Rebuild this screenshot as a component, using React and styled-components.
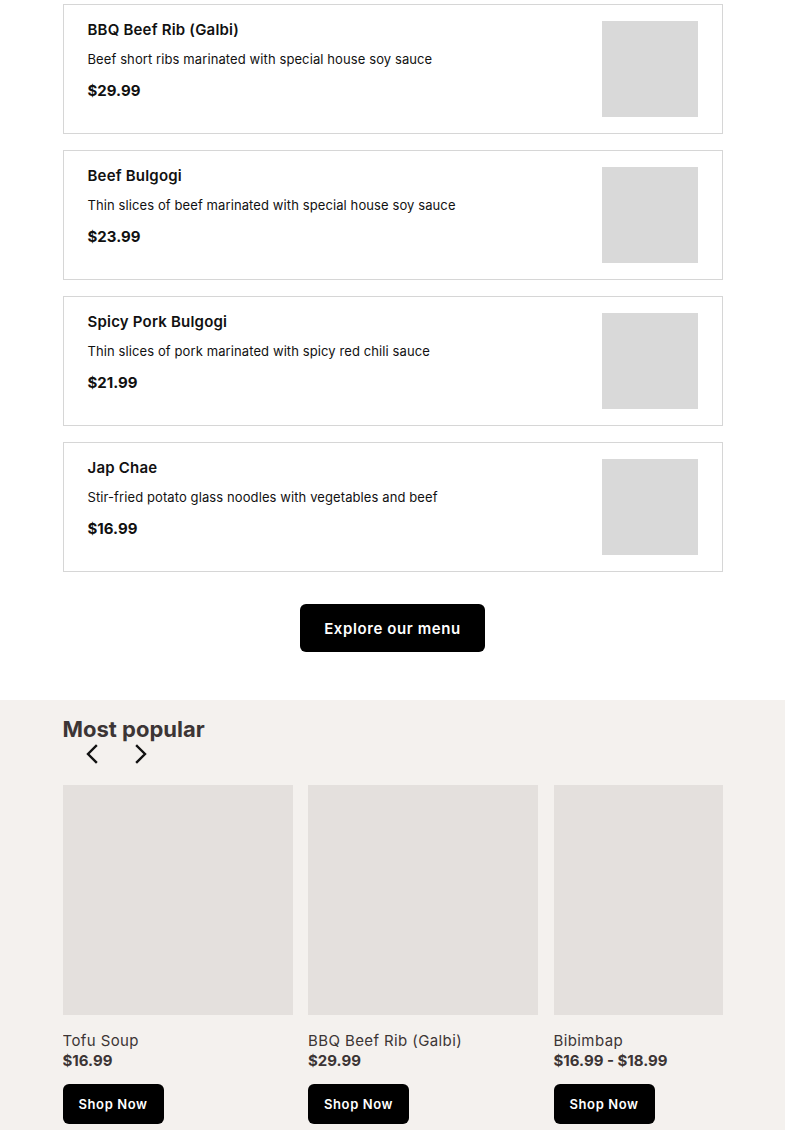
import React from "react";
import styled, { createGlobalStyle } from "styled-components";

const menuItems = [
  {
    name: "BBQ Beef Rib (Galbi)",
    desc: "Beef short ribs marinated with special house soy sauce",
    price: "$29.99",
  },
  {
    name: "Beef Bulgogi",
    desc: "Thin slices of beef marinated with special house soy sauce",
    price: "$23.99",
  },
  {
    name: "Spicy Pork Bulgogi",
    desc: "Thin slices of pork marinated with spicy red chili sauce",
    price: "$21.99",
  },
  {
    name: "Jap Chae",
    desc: "Stir-fried potato glass noodles with vegetables and beef",
    price: "$16.99",
  },
];

const popular = [
  { name: "Tofu Soup", price: "$16.99" },
  { name: "BBQ Beef Rib (Galbi)", price: "$29.99" },
  { name: "Bibimbap", price: "$16.99 - $18.99" },
];

const Chevron = ({ dir }) => (
  <svg width="14" height="20" viewBox="0 0 14 20" fill="none">
    <polyline
      points={dir === "left" ? "11,2 3,10 11,18" : "3,2 11,10 3,18"}
      stroke="#111"
      strokeWidth="2.4"
      strokeLinecap="square"
    />
  </svg>
);

const App = () => {
  return (
    <>
      <GlobalStyle />
      <MenuSection>
        <MenuList>
          {menuItems.map((item) => (
            <MenuCard key={item.name}>
              <MenuText>
                <h3>{item.name}</h3>
                <p>{item.desc}</p>
                <Price>{item.price}</Price>
              </MenuText>
              <Thumb />
            </MenuCard>
          ))}
        </MenuList>
        <BlackButton $size="lg">Explore our menu</BlackButton>
      </MenuSection>

      <PopularSection>
        <Inner>
          <h2>Most popular</h2>
          <Arrows>
            <ArrowBtn aria-label="Previous">
              <Chevron dir="left" />
            </ArrowBtn>
            <ArrowBtn aria-label="Next">
              <Chevron dir="right" />
            </ArrowBtn>
          </Arrows>
          <Track>
            {popular.map((p) => (
              <Product key={p.name}>
                <ProductImage />
                <ProductName>{p.name}</ProductName>
                <ProductPrice>{p.price}</ProductPrice>
                <BlackButton $size="sm">Shop Now</BlackButton>
              </Product>
            ))}
          </Track>
        </Inner>
      </PopularSection>
    </>
  );
};

// Styled Components
const GlobalStyle = createGlobalStyle`
  body {
    margin: 0;
    font-family: Inter, "Noto Sans", sans-serif;
    background: #fff;
  }
  * {
    box-sizing: border-box;
  }
`;

const MenuSection = styled.section`
  display: flex;
  flex-direction: column;
  align-items: center;
  padding: 4px 0 48px;
`;

const MenuList = styled.div`
  display: flex;
  flex-direction: column;
  gap: 16px;
  width: 660px;
  margin-bottom: 32px;
`;

const MenuCard = styled.div`
  display: flex;
  justify-content: space-between;
  border: 1px solid #d6d6d6;
  padding: 16px 24px;
  height: 130px;
`;

const MenuText = styled.div`
  display: flex;
  flex-direction: column;
  color: #111;

  h3 {
    margin: 0;
    font-size: 15px;
    font-weight: 600;
    line-height: 18px;
    letter-spacing: 0.2px;
  }

  p {
    margin: 10px 0 0;
    font-size: 13px;
    line-height: 20px;
    letter-spacing: 0.1px;
  }
`;

const Price = styled.span`
  margin-top: 12px;
  font-size: 15px;
  font-weight: 700;
  line-height: 20px;
`;

const Thumb = styled.div`
  width: 96px;
  height: 96px;
  background: #d9d9d9;
`;

const BlackButton = styled.button`
  border: none;
  background: #000;
  color: #fff;
  font-family: inherit;
  font-weight: 600;
  letter-spacing: 0.6px;
  border-radius: 6px;
  cursor: pointer;
  height: ${(p) => (p.$size === "lg" ? "48px" : "40px")};
  padding: ${(p) => (p.$size === "lg" ? "0 24px" : "0 16px")};
  font-size: ${(p) => (p.$size === "lg" ? "15px" : "13px")};
  align-self: ${(p) => (p.$size === "lg" ? "center" : "flex-start")};
`;

const PopularSection = styled.section`
  background: #f4f1ee;
  padding: 14px 0 40px;
`;

const Inner = styled.div`
  width: 660px;
  margin: 0 auto;
  overflow: hidden;

  h2 {
    margin: 0;
    font-size: 22px;
    font-weight: 700;
    color: #3c3535;
    line-height: 30px;
  }
`;

const Arrows = styled.div`
  display: flex;
  gap: 35px;
  padding-left: 22px;
  height: 20px;
  align-items: center;
  margin-bottom: 21px;
`;

const ArrowBtn = styled.button`
  border: none;
  background: none;
  padding: 0;
  display: flex;
  cursor: pointer;
`;

const Track = styled.div`
  display: flex;
  gap: 15.5px;
`;

const Product = styled.div`
  flex: 0 0 230px;
  display: flex;
  flex-direction: column;
  color: #3c3535;
`;

const ProductImage = styled.div`
  width: 230px;
  height: 230px;
  background: #e4e0dd;
  margin-bottom: 16px;
`;

const ProductName = styled.span`
  font-size: 15px;
  line-height: 20px;
  letter-spacing: 0.4px;
`;

const ProductPrice = styled.span`
  font-size: 15px;
  font-weight: 700;
  line-height: 20px;
  margin-bottom: 13px;
`;

export default App;
